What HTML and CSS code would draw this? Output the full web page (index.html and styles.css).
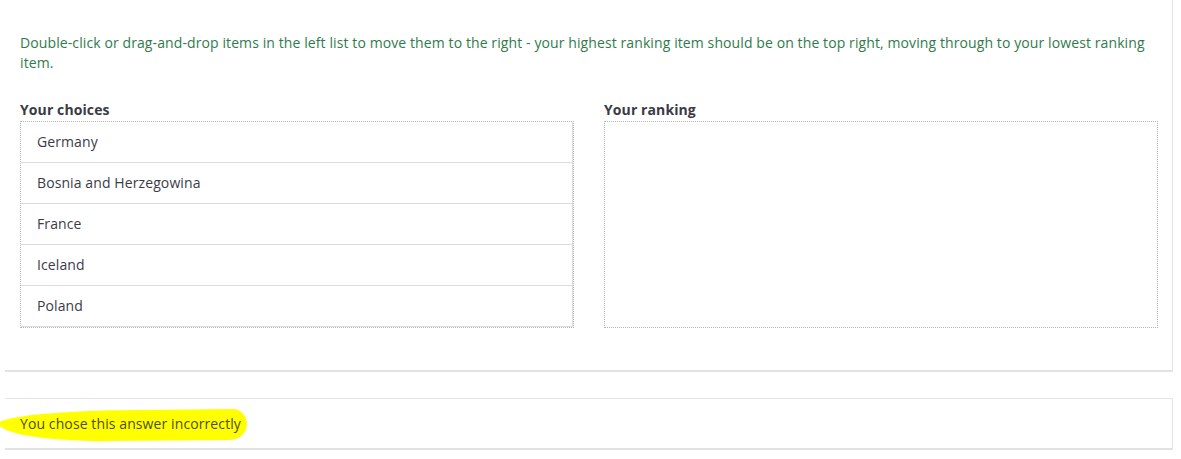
FILE: index.html
```html
<!DOCTYPE html>
<html>
<head>
  <title>Ranking question</title>
  <meta name="viewport" content="width=device-width, initial-scale=1">
  <link rel="stylesheet" href="styles.css">
</head>
<body>
  <div class="card question">
    <p class="prompt">Double-click or drag-and-drop items in the left list to move them to the right - your highest ranking item should be on the top right, moving through to your lowest ranking item.</p>
    <div class="columns">
      <div class="column">
        <div class="label">Your choices</div>
        <ul class="list choices">
          <li>Germany</li>
          <li>Bosnia and Herzegowina</li>
          <li>France</li>
          <li>Iceland</li>
          <li>Poland</li>
        </ul>
      </div>
      <div class="column">
        <div class="label">Your ranking</div>
        <ul class="list ranking"></ul>
      </div>
    </div>
  </div>
  <div class="card feedback">
    <span class="marker">You chose this answer incorrectly</span>
  </div>
</body>
</html>
```

FILE: styles.css
```css
html {font-family: "Open Sans", "Noto Sans", sans-serif; font-size: 14px; line-height: 20px; letter-spacing: 0.1px;}
body {margin: 0; padding: 0 8px 10px 5px; background: #fff; color: #333;}
.card {background: #fff; border-right: 1px solid #e4e4e4; box-shadow: 0 2px 0 #e2e2e2;}
.question {padding: 33px 14px 42px 15px;}
.prompt {margin: 0 0 27px; color: #2f7b4c;}
.columns {display: grid; grid-template-columns: 1fr 1fr; column-gap: 30px;}
.label {font-weight: bold; color: #3a3a44; margin-bottom: 1px;}
.list {list-style: none; margin: 0; padding: 0; height: 205px; border: 1px dotted #b5b5b5;}
.list li {padding: 10px 16px; border-bottom: 1px solid #dcdcdc; border-right: 1px solid #dcdcdc; color: #3b3b48;}
.feedback {position: relative; z-index: 0; margin-top: 28px; border-top: 1px solid #e4e4e4; padding: 15px 15px 14px;}
.marker {position: relative; color: #4f4d1c;}
.marker:before {content: ""; position: absolute; z-index: -1; left: -21px; right: -6px; top: -4px; bottom: -8px; background: #ffff00; border-radius: 55% 14px 18px 45% / 40% 50% 50% 60%; transform: rotate(-0.5deg);}
```
